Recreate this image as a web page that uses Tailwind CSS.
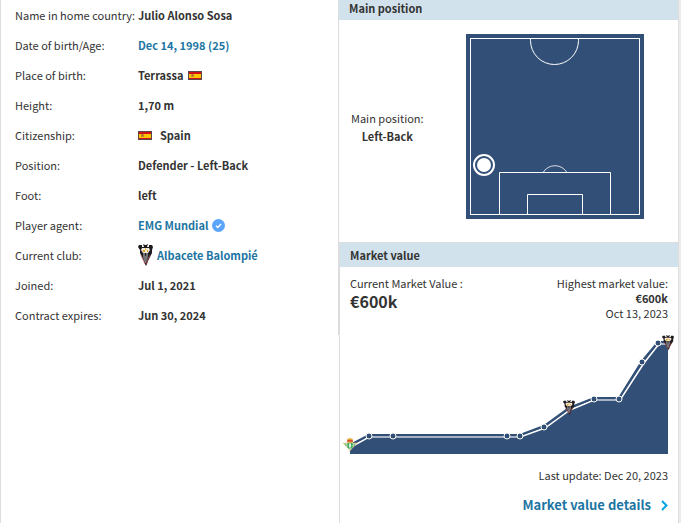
<!DOCTYPE html>
<html lang="en">
<head>
    <meta charset="UTF-8">
    <meta name="viewport" content="width=device-width, initial-scale=1.0">
    <title>Julio Alonso - Player profile</title>
    <script src="https://cdn.jsdelivr.net/npm/@tailwindcss/browser@4"></script>
</head>
<body class="bg-[#ececec] font-['Noto_Sans_CJK_SC',sans-serif] text-[11px] text-[#333333]">

    <!-- Shared symbols -->
    <svg class="hidden">
        <symbol id="flag-es" viewBox="0 0 14 9">
            <rect width="14" height="9" fill="#5b4a48"/>
            <rect x="1" y="1" width="12" height="7" fill="#d2101c"/>
            <rect x="1" y="3" width="12" height="4" fill="#ffc400"/>
            <rect x="3" y="3" width="3" height="3" fill="#c98a2a"/>
            <rect x="4" y="4" width="1" height="1" fill="#a8562c"/>
        </symbol>
        <symbol id="albacete" viewBox="0 0 15 22" preserveAspectRatio="none">
            <path d="M0 3 1 1h3v2h2L5 0l2 1h1l2-1-1 3h2V1h3l1 2-1 3v3l-2 4-2 4-1 3-1 2-1-2-1-3-2-4-2-4V6z" fill="#1f1b1e"/>
            <path d="M4 4h7l1 2-2 3H5L3 6z" fill="#f3e9dc"/>
            <path d="M5 6h2v2H5zM9 6h1v2H9z" fill="#d9a51c"/>
            <path d="M7 4h1v2h-1z" fill="#e9c64a"/>
            <path d="M5 9h5v4l-2 6h-1l-2-6z" fill="#77757c"/>
            <path d="M3 11 7 20M12 11 8 20" stroke="#b34a50" stroke-opacity=".7" fill="none"/>
            <path d="M7 9h1v3h-1z" fill="#222222"/>
        </symbol>
        <symbol id="betis" viewBox="0 0 16 14">
            <path d="M0 5h16l-8 9z" fill="#d8c679"/>
            <path d="M2 6h12l-6 7z" fill="#e4f3e4"/>
            <path d="M3 6h1v2h-1zM6 5h1v6h-1zM9 5h1v6h-1zM12 6h1v2h-1z" fill="#2fa45a"/>
            <circle cx="8" cy="8" r="3" fill="none" stroke="#39a75f"/>
            <path d="M5 1l3-1 3 1v4h-6z" fill="#e5b23f"/>
            <path d="M5 2h6v2h-6z" fill="#d84f35"/>
        </symbol>
    </svg>

    <main class="grid min-h-screen grid-cols-[339fr_342fr]">

        <!-- Player data -->
        <section class="border-l border-[#dddddd] bg-white">
            <dl class="grid grid-cols-[123px_1fr] auto-rows-[30px] items-center border-r border-[#dddddd] pb-[5px] pl-[14px]">
                <dt class="whitespace-nowrap">Name in home country:</dt>
                <dd class="font-bold">Julio Alonso Sosa</dd>
                <dt>Date of birth/Age:</dt>
                <dd class="font-bold"><a href="#" class="text-[#1d75a3]">Dec 14, 1998 (25)</a></dd>
                <dt>Place of birth:</dt>
                <dd class="flex items-center gap-1 font-bold">Terrassa <svg class="h-[9px] w-[14px]" role="img" aria-label="Spain"><use href="#flag-es"/></svg></dd>
                <dt>Height:</dt>
                <dd class="font-bold">1,70 m</dd>
                <dt>Citizenship:</dt>
                <dd class="flex items-center gap-2 font-bold"><svg class="h-[9px] w-[14px]" role="img" aria-label="Spain"><use href="#flag-es"/></svg> Spain</dd>
                <dt>Position:</dt>
                <dd class="font-bold">Defender - Left-Back</dd>
                <dt>Foot:</dt>
                <dd class="font-bold">left</dd>
                <dt>Player agent:</dt>
                <dd class="flex items-center gap-1 font-bold">
                    <a href="#" class="text-[#1d75a3]">EMG Mundial</a>
                    <svg class="size-[13px]" viewBox="0 0 13 13" fill="none">
                        <circle cx="6.5" cy="6.5" r="6.5" fill="#5ba4fc"/>
                        <path d="M4 6.8 5.8 8.5 9 5" stroke="#fff" stroke-width="1.4"/>
                    </svg>
                </dd>
                <dt>Current club:</dt>
                <dd class="flex items-center gap-1 font-bold">
                    <svg class="h-[22px] w-[15px]"><use href="#albacete"/></svg>
                    <a href="#" class="text-[#1d75a3]">Albacete Balompié</a>
                </dd>
                <dt>Joined:</dt>
                <dd class="font-bold">Jul 1, 2021</dd>
                <dt>Contract expires:</dt>
                <dd class="font-bold">Jun 30, 2024</dd>
            </dl>
        </section>

        <div class="mr-[2px] flex flex-col">

            <!-- Main position -->
            <section class="border-r border-[#dddddd] bg-white">
                <h2 class="bg-[#d2e2ec] px-[10px] pb-1 leading-4 font-bold">Main position</h2>
                <div class="flex items-center justify-between pt-[14px] pr-[34px] pb-[23px] pl-3">
                    <div class="text-center leading-[18px]">
                        <p>Main position:</p>
                        <p class="font-bold">Left-Back</p>
                    </div>
                    <svg class="h-[185px] w-[178px]" viewBox="0 0 178 185" fill="none" stroke="#fff">
                        <rect width="178" height="185" fill="#325077" stroke="none"/>
                        <rect x="4.5" y="4.5" width="169" height="176"/>
                        <path d="M64.5 4.5v2a24 24 0 0 0 48 0v-2"/>
                        <path d="M33.5 180.5v-42h111v42M61.5 180.5v-20h55v20"/>
                        <path d="M77 138.5a14 14 0 0 1 24 0" stroke-opacity=".8"/>
                        <circle cx="18" cy="131" r="10" stroke-width="2"/>
                        <circle cx="18" cy="131" r="7" fill="#fff" stroke="none"/>
                    </svg>
                </div>
            </section>

            <!-- Market value -->
            <section class="flex-1 border-x border-t border-[#dddddd] bg-white">
                <h2 class="bg-[#d2e2ec] px-[10px] leading-6 font-bold">Market value</h2>
                <div class="px-[10px] pt-[9px]">
                    <div class="flex justify-between leading-[15px]">
                        <div>
                            <p>Current Market Value :</p>
                            <p class="text-base leading-5 font-bold">€600k</p>
                        </div>
                        <div class="text-right">
                            <p>Highest market value:</p>
                            <p class="font-bold">€600k</p>
                            <p>Oct 13, 2023</p>
                        </div>
                    </div>
                    <svg class="mt-[13px] h-[120px] w-full overflow-visible" viewBox="0 0 318 120" fill="none">
                        <path d="M0 111 19 101H170L194 92 219 74 244 64H269L292 27 308 8H318V120H0z" fill="#325077"/>
                        <path d="M19 103H170M244 66H269M308 10H318" stroke="#a5b3c5" stroke-width="2"/>
                        <path d="M1 113 19 103M170 103 195 94 220 76 244 66M270 66 294 29 309 10" stroke="#fff" stroke-width="1.5"/>
                        <path d="M0 111 19 101H170L194 92 219 74 244 64H269L292 27 308 8H318" stroke="#325077" stroke-width="2"/>
                        <g fill="#325077" stroke="#fff">
                            <circle cx="19" cy="102" r="3"/>
                            <circle cx="43" cy="102" r="3"/>
                            <circle cx="157" cy="102" r="3"/>
                            <circle cx="170" cy="102" r="3"/>
                            <circle cx="194" cy="93" r="3"/>
                            <circle cx="244" cy="65" r="3"/>
                            <circle cx="269" cy="65" r="3"/>
                            <circle cx="292" cy="28" r="3"/>
                            <circle cx="308" cy="9" r="3"/>
                        </g>
                        <use href="#betis" x="-8" y="104" width="16" height="13"/>
                        <use href="#albacete" x="213" y="66" width="12" height="15"/>
                        <use href="#albacete" x="312" y="1" width="12" height="15"/>
                    </svg>
                    <p class="mt-3 text-right leading-[18px]">Last update: Dec 20, 2023</p>
                    <a href="#" class="mt-[11px] flex items-center justify-end gap-[10px] text-[13px] leading-5 font-bold text-[#1d75a3]">
                        Market value details
                        <svg class="h-[11px] w-[7px]" viewBox="0 0 7 11" fill="none" stroke="#00a5e3" stroke-width="2"><path d="M1 1 5.5 5.5 1 10"/></svg>
                    </a>
                </div>
            </section>
        </div>
    </main>
</body>
</html>
